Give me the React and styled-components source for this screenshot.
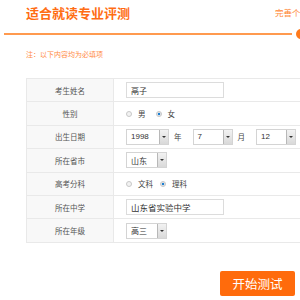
import styled, { createGlobalStyle } from 'styled-components'

const GlobalStyle = createGlobalStyle`
  html, body {
    margin: 0;
    padding: 0;
    background: #fff;
    overflow: hidden;
  }
  body {
    font-family: "Liberation Sans", "Noto Sans CJK SC", sans-serif;
  }
`

const Page = styled.div`
  width: 300px;
  height: 300px;
  overflow: hidden;
  background: #fff;
`

const Header = styled.div`
  box-sizing: border-box;
  display: flex;
  align-items: center;
  height: 28px;
  padding-left: 26px;
  width: 330px;
`

const Title = styled.h1`
  margin: 0;
  font-size: 13px;
  font-weight: bold;
  color: #ff6d14;
  line-height: 16px;
`

const StepText = styled.span`
  margin-left: auto;
  font-size: 8.5px;
  color: #ff8a3a;
  white-space: nowrap;
  margin-top: -4px;
  width: 55px;
  overflow: hidden;
`

const Progress = styled.div`
  display: flex;
  align-items: center;
  width: 320px;
  padding-left: 4px;
  height: 12px;
`

const Line = styled.div`
  width: 288px;
  height: 1.5px;
  background: #ff9a4f;
`

const Dot = styled.div`
  width: 10px;
  height: 10px;
  border-radius: 50%;
  background: #ff7a1c;
  margin-left: 4px;
  flex: none;
`

const Note = styled.p`
  margin: 10px 0 0 26px;
  font-size: 7px;
  line-height: 10px;
  color: #ff8b45;
`

const Table = styled.table`
  margin: 18px 0 0 26px;
  border-collapse: collapse;
  width: 330px;
  table-layout: fixed;
`

const Row = styled.tr`
  height: 23.4px;
`

const Label = styled.td`
  width: 86px;
  background: #f8f8f8;
  border: 1px solid #e9e9e9;
  text-align: center;
  font-size: 7.5px;
  color: #555;
  padding: 0;
`

const Value = styled.td`
  border: 1px solid #e9e9e9;
  padding: 0 0 0 12px;
  font-size: 8px;
  color: #333;
`

const Field = styled.div`
  display: flex;
  align-items: center;
  gap: ${p => p.$gap || 5}px;
`

const TextBox = styled.div`
  box-sizing: border-box;
  width: 98px;
  height: 16px;
  border: 1px solid #dcdcdc;
  padding-left: 4px;
  display: flex;
  align-items: center;
  font-size: ${p => p.$size || 8}px;
  color: #333;
  background: #fff;
`

const Select = styled.div`
  box-sizing: border-box;
  width: ${p => p.$w}px;
  height: 16px;
  border: 1px solid #d4d4d4;
  display: flex;
  align-items: stretch;
  background: #fff;
  flex: none;
`

const SelectText = styled.span`
  flex: 1;
  display: flex;
  align-items: center;
  padding-left: 4px;
  font-size: 8px;
  color: #333;
`

const Arrow = styled.span`
  width: 8px;
  border-left: 1px solid #b8b8b8;
  background: linear-gradient(#f2f2f2, #d9d9d9);
  display: flex;
  align-items: center;
  justify-content: center;

  &::after {
    content: '';
    border-left: 2px solid transparent;
    border-right: 2px solid transparent;
    border-top: 2px solid #333;
  }
`

const Unit = styled.span`
  font-size: 7.5px;
  color: #444;
  margin-right: ${p => p.$mr || 0}px;
`

const Radio = styled.span`
  box-sizing: border-box;
  width: 6px;
  height: 6px;
  border-radius: 50%;
  border: 1px solid #c8c8c8;
  background: ${p => (p.$on ? 'radial-gradient(circle, #1d7fd1 0 1.3px, #e8e8e8 1.6px)' : '#f2f2f2')};
  flex: none;
`

const RadioText = styled.span`
  font-size: 7.5px;
  color: #444;
  margin-right: ${p => p.$mr || 0}px;
  margin-left: 2px;
`

const Footer = styled.div`
  padding: 28px 0 0 220px;
`

const Button = styled.button`
  width: 75px;
  height: 25px;
  border: none;
  border-radius: 2px;
  background: #ff6b0c;
  color: #fff;
  font-family: "Noto Sans CJK SC", sans-serif;
  font-size: 12.5px;
  padding: 0;
  cursor: pointer;
`

function FakeSelect({ w, value }) {
  return (
    <Select $w={w}>
      <SelectText>{value}</SelectText>
      <Arrow />
    </Select>
  )
}

export default function App() {
  return (
    <Page>
      <GlobalStyle />
      <Header>
        <Title>适合就读专业评测</Title>
        <StepText>完善个人信息</StepText>
      </Header>
      <Progress>
        <Line />
        <Dot />
      </Progress>
      <Note>注：以下内容均为必填项</Note>
      <Table>
        <tbody>
          <Row>
            <Label>考生姓名</Label>
            <Value><TextBox>鬲子</TextBox></Value>
          </Row>
          <Row>
            <Label>性别</Label>
            <Value>
              <Field $gap={4}>
                <Radio />
                <RadioText $mr={6}>男</RadioText>
                <Radio $on />
                <RadioText>女</RadioText>
              </Field>
            </Value>
          </Row>
          <Row>
            <Label>出生日期</Label>
            <Value>
              <Field $gap={5}>
                <FakeSelect w={43} value="1998" />
                <Unit $mr={6}>年</Unit>
                <FakeSelect w={40} value="7" />
                <Unit $mr={6}>月</Unit>
                <FakeSelect w={40} value="12" />
              </Field>
            </Value>
          </Row>
          <Row>
            <Label>所在省市</Label>
            <Value><FakeSelect w={41} value="山东" /></Value>
          </Row>
          <Row>
            <Label>高考分科</Label>
            <Value>
              <Field $gap={4}>
                <Radio />
                <RadioText $mr={3}>文科</RadioText>
                <Radio $on />
                <RadioText>理科</RadioText>
              </Field>
            </Value>
          </Row>
          <Row>
            <Label>所在中学</Label>
            <Value><TextBox $size={8.5}>山东省实验中学</TextBox></Value>
          </Row>
          <Row>
            <Label>所在年级</Label>
            <Value><FakeSelect w={41} value="高三" /></Value>
          </Row>
        </tbody>
      </Table>
      <Footer>
        <Button>开始测试</Button>
      </Footer>
    </Page>
  )
}
